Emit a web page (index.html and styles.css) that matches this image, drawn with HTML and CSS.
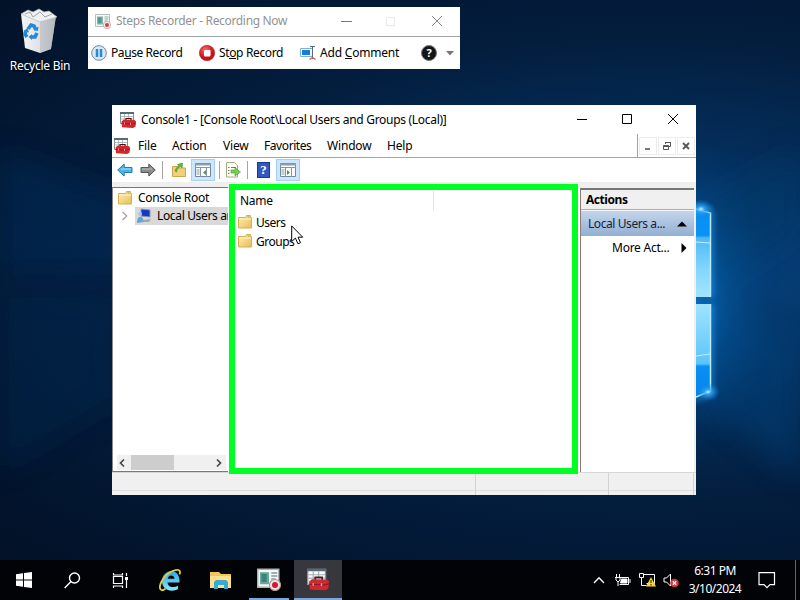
FILE: index.html
```
<!DOCTYPE html>
<html lang="en">
<head>
<meta charset="utf-8">
<title>Console1</title>
<link rel="stylesheet" href="styles.css">
</head>
<body>
<svg class="defs" aria-hidden="true">
  <defs>
    <linearGradient id="gold" x1="0" y1="0" x2="1" y2="1"><stop offset="0" stop-color="#fff0b0"/><stop offset="1" stop-color="#e8bd58"/></linearGradient>
    <linearGradient id="pane" x1="0" y1="0" x2="0" y2="1"><stop offset="0" stop-color="#0a8bf0"/><stop offset=".33" stop-color="#0794f6"/><stop offset=".36" stop-color="#4fb9f6"/><stop offset=".7" stop-color="#83d6fd"/><stop offset="1" stop-color="#a4e4ff"/></linearGradient>
    <linearGradient id="pane2" x1="0" y1="0" x2="0" y2="1"><stop offset="0" stop-color="#a0e2ff"/><stop offset=".62" stop-color="#5cc4fa"/><stop offset=".65" stop-color="#0a8ff2"/><stop offset="1" stop-color="#0384ec"/></linearGradient>
    <radialGradient id="glow"><stop offset="0" stop-color="#087cd4" stop-opacity=".85"/><stop offset=".4" stop-color="#0560ab" stop-opacity=".4"/><stop offset="1" stop-color="#03386e" stop-opacity="0"/></radialGradient>
    <radialGradient id="flare"><stop offset="0" stop-color="#d4f4ff"/><stop offset=".25" stop-color="#38adff" stop-opacity=".8"/><stop offset="1" stop-color="#087cd4" stop-opacity="0"/></radialGradient>
    <linearGradient id="bin" x1="0" y1="0" x2="1" y2="0"><stop offset="0" stop-color="#f4f5f6"/><stop offset=".6" stop-color="#dcdfe2"/><stop offset="1" stop-color="#a9afb5"/></linearGradient>
    <linearGradient id="ie" x1="0" y1="0" x2="0" y2="1"><stop offset="0" stop-color="#2aa7e8"/><stop offset="1" stop-color="#8ae6fb"/></linearGradient>
    <radialGradient id="red" cx=".4" cy=".3"><stop offset="0" stop-color="#ff6a6e"/><stop offset="1" stop-color="#c8101c"/></radialGradient>
    <symbol id="folder" viewBox="0 0 16 16"><path d="M1.500 3.500h7l1-2h4v2h1v10.500h-13z" fill="url(#gold)" stroke="#d8ae50"/><path d="M2 5h12" stroke="#fff3c4"/><path d="M10.500 3h2" stroke="#88ad6b"/></symbol>
    <symbol id="toolbox" viewBox="0 0 16 16"><path d="M.5.500h13v11h-13z" fill="#fff" stroke="#89919a"/><path d="M0 0h14v2H0z" fill="#536c7b"/><path d="M1 4.500h12M1 7h12M4.500 2v9M8.500 2v9" stroke="#9fabae" stroke-width=".8"/><path d="M6 8.500V6.500h5v2" fill="none" stroke="#4c1518" stroke-width="1.200"/><path d="M1.500 9.500l2-1.700 11 .2 1.500 1.500-.4 5-2.600 1.500-11-.7z" fill="#cf2930"/><path d="M1.500 11.500l11.500.5 2.800-1" stroke="#8a1820" fill="none" stroke-width=".8"/><path d="M4.500 10.500v2M10.500 10.800v2" stroke="#ee9a92"/></symbol>
    <symbol id="recorder" viewBox="0 0 16 16"><path d="M.5 1.500h14v12H.5z" fill="#f4f7f7" stroke="#aab2b2"/><path d="M2 3.500h6v8H2z" fill="#6ba79e"/><path d="M3 4.500h3.500v5.500H3z" fill="#38857a"/><path d="M9.500 4h4M9.500 6h4M9.500 8h3" stroke="#88979b"/><circle cx="12" cy="12" r="3.700" fill="#f4e4e4" stroke="#b98d92" stroke-width=".7"/><circle cx="12" cy="12" r="2" fill="#c81f32"/></symbol>
    <symbol id="panel" viewBox="0 0 18 16"><path d="M1.500 1.500h15v13h-15z" fill="#fff" stroke="#75889b"/><path d="M1 2.500h16" stroke="#8ba0b5" stroke-width="2"/><path d="M1 5.500h16M6.500 6v9M12.500 6v9M2.500 8h3M2.500 10h3M2.500 12h3" stroke="#8596a5"/></symbol>
  </defs>
</svg>

<div class="screen">
  <main class="desktop">
    <svg class="wallpaper" width="800" height="560" viewBox="0 0 800 560">
      <defs><filter id="soft" x="-50%" y="-50%" width="200%" height="200%"><feGaussianBlur stdDeviation="14"/></filter><filter id="spark" x="-200%" width="500%"><feGaussianBlur stdDeviation="3"/></filter></defs>
      <g filter="url(#soft)">
        <path d="M690 210L800 150V230L700 300z" fill="#053565" opacity=".4"/>
        <path d="M690 300L800 345V480L690 390z" fill="#06498a" opacity=".35"/>
        <path d="M0 150L130 200V272H0z" fill="#053d74" opacity=".3"/>
        <path d="M0 290h120v110L0 470z" fill="#052e5b" opacity=".3"/>
      </g>
      <ellipse cx="690" cy="300" rx="92" ry="165" fill="url(#glow)"/>
      <g filter="url(#spark)" stroke="#2aa5ff" fill="none" opacity=".7"><path d="M690 207L711 212V297M711 304V394L690 400" stroke-width="4"/></g>
      <path d="M680 205L710 213V297H680z" fill="url(#pane)"/><path d="M680 304H710V392L680 400z" fill="url(#pane2)"/>
      <path d="M696 209L710.500 213V297M710.500 304V391L696 397" fill="none" stroke="#b5edff" stroke-width="1.500"/>
      <path d="M696 242l14 1M696 356l14-2" stroke="#c3efff"/>
      <ellipse cx="701" cy="209" rx="14" ry="10" fill="url(#flare)"/><ellipse cx="708" cy="392" rx="12" ry="9" fill="url(#flare)"/>
    </svg>

    <div class="shortcut">
      <svg width="44" height="48" viewBox="0 0 44 48"><path d="M3 6L38 8 33 41 22 45 7 40z" fill="url(#bin)"/><path d="M22 13L38 8 33 41 22 45z" fill="#b8bdc1" opacity=".65"/><path d="M3 6l7-4 5 2 6-3 5 3 5-1 8 6-17 5z" fill="#eef0f1" stroke="#b6bbc0" stroke-width=".7"/><path d="M7 6l5-2 3 5 7-5 5 5 7-3" fill="none" stroke="#9fa5aa"/><g fill="none" stroke="#2488d8" stroke-width="3.600"><path d="M10 21l3-4 3 1 2 4"/><path d="M19 25l-2 4h-4"/><path d="M9 29l-2-3 1-3"/></g><path d="M15.500 22l4.500 1 .5-4.500zM14 26v6l-3.500-3zM5.500 23l4-3 1.500 4.500z" fill="#2488d8"/></svg>
      <span class="shortcut-name">Recycle Bin</span>
    </div>

    <section class="recorder">
      <header class="recorder-title">
        <svg width="16" height="16" opacity=".85"><use href="#recorder"/></svg>
        <span class="t-rec">Steps Recorder - Recording Now</span>
        <svg class="recorder-controls" width="102" height="12" viewBox="0 0 102 12" fill="none"><path d="M0 6.500h11" stroke="#777"/><path d="M45.500 2.500h8v8h-8z" stroke="#e9e9e9"/><path d="M91 1l10 10M101 1L91 11" stroke="#888"/></svg>
      </header>
      <div class="recorder-bar">
        <svg width="16" height="16" viewBox="0 0 16 16"><circle cx="8" cy="8" r="7.300" fill="#d9e8f2" stroke="#71889c"/><path d="M6 4v8M10 4v8" stroke="#278bd0" stroke-width="2.500"/></svg>
        <span class="t-pause">Pa<u>u</u>se Record</span>
        <svg width="16" height="16" viewBox="0 0 16 16"><circle cx="8" cy="8" r="7.700" fill="url(#red)" stroke="#b9222d" stroke-width=".6"/><rect x="5" y="5" width="6.500" height="6.500" rx="1" fill="#fff"/></svg>
        <span class="t-stop">St<u>o</u>p Record</span>
        <svg width="16" height="16" viewBox="0 0 16 16"><path d="M.5 3.500h12v8H.5z" fill="#fff" stroke="#83aed5"/><path d="M2 5h8v5H2z" fill="#187bdc"/><path d="M10 1.500h5M12.500 2v12" stroke="#526a8a"/><path d="M9.500 14.500l3-2 3 2" stroke="#d55948" stroke-width="1.300" fill="none"/></svg>
        <span class="t-add">Add <u>C</u>omment</span>
        <span class="help">?</span>
        <svg width="8" height="5"><path d="M0 0h8L4 4.500z" fill="#777"/></svg>
      </div>
    </section>

    <section class="console">
      <header class="titlebar">
        <svg width="16" height="16"><use href="#toolbox"/></svg>
        <h1 class="t-title">Console1 - [Console Root\Local Users and Groups (Local)]</h1>
        <svg class="controls" width="102" height="12" viewBox="0 0 102 12" fill="none" stroke="#000"><path d="M0 6.500h10M45.500 1.500h9v9h-9zM91 1l10 10M101 1L91 11"/></svg>
      </header>
      <nav class="menubar">
        <svg width="16" height="16"><use href="#toolbox"/></svg>
        <div class="menus"><span class="m-file">File</span><span class="m-action">Action</span><span class="m-view">View</span><span class="m-fav">Favorites</span><span class="m-win">Window</span><span>Help</span></div>
        <div class="child-controls">
          <span class="child"><svg width="10" height="10"><path d="M2 8h5" stroke="#555" stroke-width="1.600"/></svg></span>
          <span class="child"><svg width="10" height="10" fill="none" stroke="#555"><path d="M3.500 3V1.500h5v4H7M3 1.500h6M1.500 4.500h5v4h-5zM1 5.500h6"/></svg></span>
          <span class="child"><svg width="10" height="10"><path d="M2 2l6 6M8 2L2 8" stroke="#555" stroke-width="1.800"/></svg></span>
        </div>
      </nav>
      <div class="toolbar">
        <svg class="ib" width="16" height="16" viewBox="0 0 16 16"><path d="M.7 8l6.500-6v3.500H15v5H7.200V14z" fill="#4cb4e8" stroke="#237db5"/><path d="M4 7h10" stroke="#a0def8"/></svg>
        <svg class="if" width="16" height="16" viewBox="0 0 16 16"><path d="M15.300 8L8.800 2v3.500H1v5h7.800V14z" fill="#8c8c8c" stroke="#555"/><path d="M2 7h10" stroke="#bbb"/></svg>
        <i class="divider d1"></i>
        <svg class="iu" width="16" height="16" viewBox="0 0 16 16"><path d="M1.500 4.500h5l2 1.500h6v8.500h-13z" fill="#f0d07a" stroke="#c8a653"/><path d="M4 9c1-3 2-4 4-5L6.500 2.500 11.500 1l-.5 5-1.500-1.500C7.500 5.500 6 7 5.500 10z" fill="#67b934" stroke="#3f8a25" stroke-width=".6"/></svg>
        <span class="tool on"><svg width="18" height="16"><use href="#panel"/><path d="M12 8v5l-3-2.500z" fill="#42a33c"/></svg></span>
        <i class="divider d2"></i>
        <svg class="ie" width="16" height="16" viewBox="0 0 16 16"><path d="M1.500.500h8l3 3v11.500h-11z" fill="#fffef1" stroke="#a9aa8d"/><path d="M3 5.500h1.500M6 5.500h5M3 8.500h1.500M3 11.500h1.500" stroke="#777"/><path d="M6 8h4V5.500L15.500 10 10 14v-3H6z" fill="#7aca55" stroke="#3f9d30" stroke-width=".6"/></svg>
        <i class="divider d3"></i>
        <span class="book">?</span>
        <span class="tool on"><svg width="18" height="16"><use href="#panel"/><path d="M8 8v5l3-2.500z" fill="#42a33c"/></svg></span>
      </div>
      <div class="panes">
        <aside class="tree">
          <div class="root"><svg width="16" height="16"><use href="#folder"/></svg><span class="t-root">Console Root</span></div>
          <div class="node"><svg class="twisty" width="6" height="10" fill="none"><path d="M.5.800L4.700 5 .5 9.200" stroke="#999" stroke-width="1.200"/></svg><div class="selected"><svg width="16" height="16" viewBox="0 0 16 16"><path d="M5 1l9 1v7l-9-1z" fill="#1438c0" stroke="#8495b6"/><circle cx="4" cy="6" r="2" fill="#a9c9e4"/><path d="M1 15c0-8 6-8 7-1z" fill="#65a5d3"/><path d="M7 12l8-1-2 3H8z" fill="#9ca9b6"/></svg><span class="t-node">Local Users an</span></div></div>
          <div class="scroll"><svg width="6" height="8" fill="none" stroke="#444" stroke-width="1.600"><path d="M5 .500L1.500 4 5 7.500"/></svg><span class="thumb"></span><svg class="next" width="6" height="8" fill="none" stroke="#444" stroke-width="1.600"><path d="M1 .500L4.500 4 1 7.500"/></svg></div>
        </aside>
        <div class="list">
          <div class="columns"><span class="t-name">Name</span></div>
          <div class="row"><svg width="16" height="16"><use href="#folder"/></svg><span class="t-users">Users</span></div>
          <div class="row"><svg width="16" height="16"><use href="#folder"/></svg><span class="t-groups">Groups</span></div>
        </div>
        <aside class="actions">
          <h2>Actions</h2>
          <div class="scope"><span class="t-scope">Local Users a...</span><svg width="10" height="6"><path d="M0 5.500L5 .500l5 5z"/></svg></div>
          <div class="more"><span class="t-more">More Act...</span><svg width="6" height="10"><path d="M.5 0l5 5-5 5z"/></svg></div>
        </aside>
      </div>
      <footer class="status"><span></span><span></span><span></span></footer>
    </section>
    <div class="highlight"></div>
    <svg class="cursor" width="13" height="20" viewBox="0 0 13 20"><path d="M.7.900v15.600l3.700-3.400 2.600 5.700 2.500-1.100-2.500-5.500h4.700z" fill="#fff" stroke="#000"/></svg>
  </main>

  <footer class="taskbar">
    <span class="task"><svg width="16" height="16" fill="#fff"><path d="M0 2.300L7 1.300v6.200H0zM8 1.100L16 0v7.500H8zM0 8.500h7v6.200l-7-1zM8 8.500h8V16l-8-1.100z"/></svg></span>
    <span class="task"><svg width="17" height="17" fill="none" stroke="#fff" stroke-width="1.400"><circle cx="10.500" cy="6" r="5"/><path d="M7 9.500L.7 16"/></svg></span>
    <span class="task"><svg width="17" height="17" fill="none" stroke="#fff" stroke-width="1.200"><path d="M1.500 4.500h9v7h-9zM1.500 1v2h9V1M1.500 16v-2h9v2M14.500 1v3M14.500 8v8"/><path d="M13 5h3v3h-3z" fill="#fff" stroke="none"/></svg></span>
    <span class="task wide"><svg width="24" height="24" viewBox="0 0 24 24"><path d="M20.500 14.500H8.500c.4 5 6 5.500 10.500 3.300v3.500C11 25 3 21 3 13.500 3 6.500 8 3 12.500 3s8.500 4 8 11.500zM8.700 10.800h6.800c-.3-4.600-6.200-4.300-6.800 0z" fill="url(#ie)"/><path d="M20.500 6.500c2-5-2-6-8-3C5 7-1.500 18 1.800 21.700c1 1 3 .3 4.700-1" fill="none" stroke="#e5ce3d" stroke-width="1.800"/></svg></span>
    <span class="task files"><svg width="22" height="19" viewBox="0 0 22 19"><path d="M0 1h9l2 2h10v14H0z" fill="#f3c65b"/><path d="M0 5h21v12H0z" fill="#ffe18a"/><path d="M4 18v-7l2-2h10l2 2v7h-4v-4H8v4z" fill="#39a9d5"/></svg></span>
    <span class="task running"><svg width="24" height="24" viewBox="0 0 16 16"><use href="#recorder"/></svg></span>
    <span class="task active"><svg width="22" height="23" viewBox="0 0 16 16"><use href="#toolbox"/></svg></span>
    <div class="tray">
      <svg width="12" height="8" fill="none" stroke="#fff" stroke-width="1.300"><path d="M1 7l5-5.300L11 7"/></svg>
      <svg class="battery" width="16" height="13" fill="none" stroke="#fff"><path d="M5.500 3.500h8v7h-9M15 5v4M1.500 0v3M4.500 0v3M0 3.500h6M1 4v2l2 2 2-2V4M3 7v5"/><path d="M6.500 5H12v4H5.500z" fill="#fff"/></svg>
      <svg class="net" width="17" height="14" fill="none" stroke="#fff"><path d="M5 1.500h10.500v9h-8M.5.500h4v4h-4zM2.500 5v7.500h5"/><path d="M12 4l5 9.500H7z" fill="#ffd52b" stroke="none"/><path d="M12 7v3M12 11v1.500" stroke="#222"/></svg>
      <svg class="sound" width="17" height="15"><path d="M1 5h2.500l4-4v12l-4-4H1z" fill="none" stroke="#fff"/><circle cx="11.500" cy="10" r="4.300" fill="#d8343e"/><path d="M9.800 8.300l3.400 3.400M13.200 8.300l-3.400 3.400" stroke="#fff" stroke-width="1.300"/></svg>
      <div class="clock"><span class="t-time">6:31 PM</span><span class="t-date">3/10/2024</span></div>
      <svg class="note" width="18" height="18" fill="none" stroke="#fff" stroke-width="1.200"><path d="M1 1.600h15.500v12H12l-3 3-3-3H1z"/></svg>
      <i class="peek"></i>
    </div>
  </footer>
</div>
</body>
</html>
```

FILE: styles.css
```
* { box-sizing: border-box; }
body { margin: 0; font: 12px/16px "Noto Sans", "Open Sans", sans-serif; color: #000; overflow: hidden; }
svg { display: block; flex: none; }
span { white-space: nowrap; }
h1, h2 { margin: 0; font: inherit; white-space: nowrap; }
.defs { position: absolute; width: 0; height: 0; }
.screen { width: 800px; height: 600px; display: flex; flex-direction: column; }
.desktop { position: relative; height: 560px; overflow: hidden; background: radial-gradient(ellipse at 650px 270px, #064b8b 0, #042d59 32%, #031d3d 57%, #021127 100%); }
.wallpaper { position: absolute; left: 0; top: 0; }

.shortcut { position: absolute; left: 0; top: 8px; width: 80px; display: flex; flex-direction: column; align-items: center; color: #fff; }
.shortcut-name { margin-top: 2px; text-shadow: 1px 1px 2px #000; letter-spacing: -.25px; }

.recorder { position: absolute; left: 88px; top: 7px; width: 372px; height: 62px; background: #fff; }
.recorder-title { height: 30px; padding: 0 17px 1px 7px; display: flex; align-items: center; gap: 5px; color: #929292; border-bottom: 1px solid #a5a5a5; }
.recorder-controls { margin-left: auto; }
.recorder-bar { height: 32px; padding: 0 5px 0 3px; display: flex; align-items: center; gap: 4px; }
.recorder-bar u { text-decoration: none; border-bottom: 1px solid #000; display: inline-block; height: 14px; line-height: 16px; }
.t-rec { letter-spacing: -.33px; }
.t-pause { width: 84px; letter-spacing: -.42px; }
.t-stop { width: 77px; letter-spacing: -.36px; }
.t-add { width: 97px; letter-spacing: -.2px; }
.help { width: 16px; height: 16px; margin-right: 5px; border: 1px solid #777; border-radius: 50%; background: #151515; color: #fff; font-weight: 700; font-size: 11px; line-height: 14px; text-align: center; }

.console { position: absolute; left: 112px; top: 105px; width: 584px; height: 390px; background: #fff; display: flex; flex-direction: column; }
.titlebar { height: 29px; padding: 0 17px 0 8px; display: flex; align-items: center; gap: 5px; }
.t-title { letter-spacing: -.29px; }
.controls { margin-left: auto; margin-top: -1px; }
.menubar { height: 24px; padding: 0 1px 0 2px; display: flex; align-items: center; border-bottom: 1px solid #a5a5a5; }
.menus { display: flex; margin-left: 8px; letter-spacing: -.18px; }
.m-file { width: 34px; }
.m-action { width: 51px; }
.m-view { width: 41px; }
.m-fav { width: 63px; letter-spacing: -.42px; }
.m-win { width: 60px; }
.child-controls { margin-left: auto; height: 23px; padding: 3px 0 2px 1px; border-left: 1px solid #a0a0a0; display: flex; gap: 1px; }
.child { width: 18px; height: 18px; display: grid; place-items: center; border: 1px solid #ececec; }
.toolbar { height: 24px; padding-left: 5px; display: flex; align-items: center; }
.if { margin-left: 7px; }
.divider { width: 1px; height: 18px; background: #a5a5a5; }
.d1 { margin: 0 8px 0 6px; }
.tool { width: 24px; height: 22px; display: grid; place-items: center; }
.on { background: #cce6fc; border: 1px solid #a5cff3; }
.iu { margin-right: 4px; }
.d2 { margin: 0 5px 0 4px; }
.d3 { margin: 0 9px 0 6px; }
.book { width: 13px; height: 16px; margin-right: 6px; border: 1px solid #183b91; background: #3158c2; color: #fff; font: 700 13px/14px "Liberation Serif", serif; text-align: center; }
.panes { height: 290px; padding-top: 5px; border-top: 1px solid #eee; background: #f0f0f0; display: grid; grid-template-columns: 116px 352px 114px; }
.tree { height: 285px; margin-top: -1px; border-top: 1px solid #777; border-bottom: 1px solid #777; border-left: 1px solid #888; background: #fff; display: flex; flex-direction: column; overflow: hidden; padding-top: 1px; }
.root { height: 18px; padding-left: 4px; display: flex; align-items: center; gap: 5px; }
.t-root { letter-spacing: -.3px; }
.node { height: 18px; padding-left: 9px; display: flex; align-items: center; }
.selected { height: 18px; margin-left: 7px; padding-left: 1px; display: flex; align-items: center; gap: 5px; background: #d9d9d9; }
.t-node { letter-spacing: -.35px; }
.scroll { height: 15px; margin: auto 2px 1px 4px; padding: 0 4px 0 2px; display: flex; align-items: center; background: #f0f0f0; }
.thumb { width: 43px; height: 15px; margin-left: 6px; background: #cdcdcd; }
.next { margin-left: auto; }
.list { height: 285px; background: #fff; padding: 3px 8px 0 9px; }
.columns { width: 197px; height: 20px; border-right: 1px solid #e2e2e2; display: flex; align-items: center; padding-left: 3px; letter-spacing: -.25px; }
.row { height: 19px; display: flex; align-items: center; gap: 3px; letter-spacing: -.5px; }
.row:nth-child(2) { margin-top: 2px; }
.row svg { margin-bottom: 2px; }
.actions { height: 285px; background: #fff; border-left: 1px solid #8d7777; border-top: 2px solid #777; }
.actions h2 { height: 20px; padding: 2px 0 0 5px; background: #f0f0f0; border-bottom: 1px solid #b0b0b0; font-weight: 700; letter-spacing: -.45px; }
.scope { height: 26px; padding: 0 7px; display: flex; align-items: center; justify-content: space-between; color: #14233a; background: linear-gradient(#c3d5eb, #93afd3); border-top: 1px solid #f4f4f4; letter-spacing: -.42px; }
.more { height: 24px; padding: 0 7px 0 31px; display: flex; align-items: center; justify-content: space-between; letter-spacing: -.25px; }
.status { height: 23px; border-top: 1px solid #d7d7d7; background: #f0f0f0; display: grid; grid-template-columns: 364px 133px 85px; box-shadow: inset 0 -4px #f0f0f0, inset 0 -5px #ddd; }
.status span { border-right: 1px solid #d3d3d3; }
.highlight { position: absolute; left: 229px; top: 184px; width: 349px; height: 290px; border: 6px solid #00ff22; }
.cursor { position: absolute; left: 291px; top: 225px; }

.taskbar { height: 40px; background: #020306; display: flex; color: #fff; }
.task { width: 48px; height: 40px; display: grid; place-items: center; }
.wide { width: 54px; }
.files { width: 45px; margin-right: 6px; }
.running { border-bottom: 2px solid #76a9dc; width: 40px; }
.active { margin-left: 5px; border-bottom: 2px solid #76a9dc; background: #37373d; }
.tray { margin-left: auto; display: flex; align-items: center; }
.battery { margin-left: 10px; }
.net { margin-left: 8px; }
.sound { margin-left: 7px; }
.clock { width: 60px; margin-left: 5px; display: flex; flex-direction: column; align-items: center; line-height: 18px; letter-spacing: -.5px; }
.note { margin-left: 13px; }
.peek { width: 5px; height: 40px; margin-left: 19px; border-left: 1px solid #666; }
```
